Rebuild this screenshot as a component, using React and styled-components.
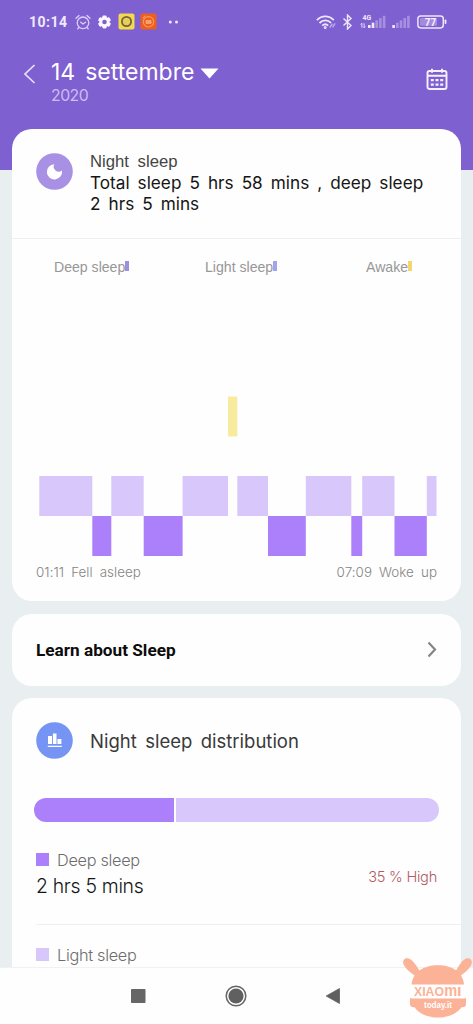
import React from "react";
import styled, { createGlobalStyle } from "styled-components";

const GlobalStyle = createGlobalStyle`
  * {
    box-sizing: border-box;
  }

  body {
    margin: 0;
    font-family: Inter, Roboto, "Liberation Sans", sans-serif;
  }
`;

const Screen = styled.div`
  width: 473px;
  height: 1024px;
  overflow: hidden;
  display: flex;
  flex-direction: column;
  position: relative;
  background: linear-gradient(#7f60d0 0 170px, #e9eff1 170px);
`;

const StatusBar = styled.div`
  height: 43px;
  padding: 0 26px 0 29px;
  display: flex;
  align-items: center;
  justify-content: space-between;
  color: #f1eafc;
  flex: none;
`;

const StatusGroup = styled.div`
  display: flex;
  align-items: center;
`;

const Clock = styled.span`
  width: 46px;
  font: 700 14px/20px Roboto, sans-serif;
  letter-spacing: 0.5px;
  white-space: nowrap;
`;

const StatusIcon = styled.svg`
  display: block;
  flex: none;
  margin-left: ${(props) => props.$gap || 0}px;
`;

const Header = styled.header`
  height: 85.5px;
  flex: none;
  display: flex;
  align-items: flex-start;
  padding: 16px 25px 0 23px;
  color: #fff;
`;

const BackIcon = styled.svg`
  margin-top: 5px;
  flex: none;
`;

const DateBlock = styled.div`
  flex: 1;
  padding-left: 15px;
`;

const DateLine = styled.div`
  display: flex;
  align-items: center;
  gap: 6px;
  height: 25px;
  margin-bottom: 1px;
  font-size: 23px;
  word-spacing: 3.5px;
  white-space: nowrap;

  svg {
    margin-top: 3px;
  }
`;

const Year = styled.div`
  font-size: 15.8px;
  line-height: 21px;
  letter-spacing: -0.5px;
  color: #cdbdf0;
`;

const CalendarIcon = styled.svg`
  margin-top: 9px;
  flex: none;
`;

const Card = styled.section`
  margin: 0 12px ${(props) => (props.$last ? 0 : 12.5)}px;
  height: ${(props) => props.$height}px;
  flex: none;
  background: #fefefe;
  border-radius: ${(props) => (props.$last ? "20px 20px 0 0" : "20px")};
  overflow: hidden;
`;

const CardHead = styled.div`
  display: flex;
  padding: 24px 24px 0;
  gap: 17px;
  height: ${(props) => props.$height}px;
`;

const SummaryHead = styled(CardHead)`
  border-bottom: 1px solid #edeff1;
`;

const RoundIcon = styled.svg`
  width: 37px;
  height: 37px;
  flex: none;
`;

const SummaryLabel = styled.div`
  margin-top: -1px;
  font: 16.7px/20px "Liberation Sans", sans-serif;
  word-spacing: 4px;
  color: #444;
`;

const SummaryText = styled.div`
  font-size: 17.2px;
  line-height: 21px;
  word-spacing: 3.2px;
  white-space: nowrap;
  color: #151515;
`;

const Legend = styled.div`
  display: grid;
  grid-template-columns: 151px 161px auto;
  padding: 19px 0 0 42px;
  height: 56px;
`;

const LegendItem = styled.div`
  display: flex;
  align-items: center;
  height: 18px;
  font-family: "Liberation Sans", sans-serif;
  font-size: 14.1px;
  color: #979797;
`;

const LegendMark = styled.i`
  width: 4px;
  height: 10px;
  margin-bottom: 1px;
  background: ${(props) => props.$color};
`;

const Chart = styled.svg`
  display: block;
`;

const ChartTimes = styled.div`
  display: flex;
  justify-content: space-between;
  padding: 6px 24px 0;
  font-size: 13.4px;
  line-height: 18px;
  font-weight: 300;
  letter-spacing: 0.05px;
  word-spacing: 3.2px;
  color: #858585;
`;

const LearnRow = styled.div`
  height: 100%;
  display: flex;
  align-items: center;
  justify-content: space-between;
  padding: 0 24px;
  font: 700 17.2px/22px Roboto, sans-serif;
  color: #0c0c0c;
`;

const DistributionTitle = styled.h2`
  margin: 0;
  font-size: 18.5px;
  line-height: 38px;
  font-weight: 400;
  word-spacing: 3.2px;
  color: #3a3a3a;
`;

const DistributionBar = styled.div`
  display: flex;
  gap: 1.5px;
  height: 24px;
  margin: 0 22px 26px;
  border-radius: 12px;
  overflow: hidden;
`;

const BarPart = styled.div`
  flex: ${(props) => props.$share};
  background: ${(props) => props.$color};
`;

const StageRow = styled.div`
  margin-left: 24px;
  padding-right: 24px;
  height: ${(props) => props.$height}px;
  display: flex;
  justify-content: space-between;
  border-bottom: 1px solid #edeff1;
`;

const StageName = styled.div`
  display: flex;
  align-items: center;
  gap: 8px;
  height: 24px;
  font-size: 16.3px;
  font-weight: 300;
  letter-spacing: -0.3px;
  color: #6d6d6d;
`;

const StageMark = styled.i`
  width: 13px;
  height: 13px;
  background: ${(props) => props.$color};
`;

const StageTime = styled.div`
  font-size: 19.4px;
  line-height: 29px;
  font-weight: 300;
  letter-spacing: -0.3px;
  color: #151515;
`;

const StageLevel = styled.div`
  padding-top: 19px;
  font-size: 14.6px;
  line-height: 20px;
  font-weight: 300;
  letter-spacing: -0.25px;
  color: #b35a66;
`;

const NextStage = styled.div`
  padding: 18px 24px 0;
`;

const NavBar = styled.nav`
  height: 57px;
  flex: none;
  margin-top: auto;
  padding-right: 3px;
  position: relative;
  display: flex;
  justify-content: center;
  align-items: center;
  gap: 78px;
  background: #fefefe;
  border-top: 1px solid #f0f1f3;
`;

const Watermark = styled.svg`
  position: absolute;
  right: 0;
  bottom: 4px;
`;

const LIGHT = "#d8c7fb";
const DEEP = "#ab80fa";
const AWAKE = "#f9eb9e";

const stages = [
  { type: "light", from: 39.3, to: 92.3 },
  { type: "deep", from: 92.3, to: 111.3 },
  { type: "light", from: 111.3, to: 143.7 },
  { type: "deep", from: 143.7, to: 182.6 },
  { type: "light", from: 182.6, to: 228 },
  { type: "awake", from: 228, to: 237.3 },
  { type: "light", from: 237.3, to: 268 },
  { type: "deep", from: 268, to: 305.8 },
  { type: "light", from: 305.8, to: 351.3 },
  { type: "deep", from: 351.3, to: 362.2 },
  { type: "light", from: 362.2, to: 394.5 },
  { type: "deep", from: 394.5, to: 426.8 },
  { type: "light", from: 426.8, to: 436.5 },
];

const stageStyle = {
  awake: { y: 101.5, color: AWAKE },
  light: { y: 181, color: LIGHT },
  deep: { y: 221, color: DEEP },
};

const legend = [
  { label: "Deep sleep", color: "#9d8fdc" },
  { label: "Light sleep", color: "#a3a3ea" },
  { label: "Awake", color: "#f3d66c" },
];

const SignalBars = ({ x, lit }) =>
  [0, 1, 2, 3, 4].map((i) => (
    <rect
      key={i}
      x={x + i * 3.7}
      y={13 - (3 + i * 2.3)}
      width="2.6"
      height={3 + i * 2.3}
      fill="#f1eafc"
      opacity={i < lit ? 1 : 0.35}
    />
  ));

const StatusIcons = () => (
  <StatusBar>
    <StatusGroup>
      <Clock>10:14</Clock>
      <StatusIcon width="16" height="16" viewBox="0 0 16 16" fill="none" stroke="#ddd0f7" strokeWidth="1.3" strokeLinecap="round">
        <circle cx="8" cy="8.8" r="5.8" />
        <path d="M5.7 8.2 8 10l2.6-1.8M1 4.2 4 1.4M15 4.2 12 1.4M4 13.5l-1.2 1.3M12 13.5l1.2 1.3" />
      </StatusIcon>
      <StatusIcon $gap={7} width="13" height="14" viewBox="0 0 13 14">
        <g fill="#fbf8ff">
          {[0, 60, 120].map((a) => (
            <rect key={a} x="4.3" y="0.5" width="4.4" height="13" rx="1.4" transform={`rotate(${a} 6.5 7)`} />
          ))}
          <circle cx="6.5" cy="7" r="5" />
        </g>
        <circle cx="6.5" cy="7" r="2.3" fill="#7f60d0" />
      </StatusIcon>
      <StatusIcon $gap={7} width="17" height="17" viewBox="0 0 17 17">
        <rect x="0.5" y="0.5" width="16" height="16" rx="2" fill="#f2da4e" />
        <circle cx="8.5" cy="8.5" r="4.6" fill="#e4ce5c" stroke="#746237" strokeWidth="1.8" />
      </StatusIcon>
      <StatusIcon $gap={5} width="17" height="17" viewBox="0 0 17 17">
        <rect x="0.5" y="0.5" width="16" height="16" rx="2" fill="#ef5f1c" />
        <circle cx="8.5" cy="8.8" r="5.2" fill="none" stroke="#f79a63" strokeWidth="1.1" />
        <path d="M2.8 5.2 5.5 2.8M6 7.7h5v2.6H6z" fill="#f79a63" stroke="#fbb184" strokeWidth="0.9" />
      </StatusIcon>
      <StatusIcon $gap={11} width="12" height="4" viewBox="0 0 12 4">
        <circle cx="2.3" cy="2" r="1.5" fill="#efe8fb" />
        <circle cx="8.5" cy="2" r="1.5" fill="#efe8fb" />
      </StatusIcon>
    </StatusGroup>
    <StatusGroup>
      <StatusIcon width="20" height="14" viewBox="0 0 20 14" fill="none" stroke="#eee6fb" strokeWidth="1.8">
        <path d="M0.9 5.2C5.8.2 13 .2 17.8 5.2M3.5 8c3.5-3.5 8.2-3.5 11.5-.2M6.2 10.6c2-1.8 4.2-1.8 6 0" />
        <circle cx="9.2" cy="12.4" r="0.6" />
        <path d="m13.8 12.6 2.5-4M16.6 12.4l2.5-4" stroke="#bba6e8" strokeWidth="1.6" />
      </StatusIcon>
      <StatusIcon $gap={6} width="11" height="16" viewBox="0 0 11 16" fill="none" stroke="#eee6fb" strokeWidth="1.4">
        <path d="m1.5 4.5 7.5 7L5.5 15V1L9 4.5l-7.5 7" />
      </StatusIcon>
      <StatusIcon $gap={7} width="28" height="16" viewBox="0 0 28 16">
        <text x="2.6" y="5.7" fontSize="7.5" fontWeight="700" fontFamily="Roboto" fill="#f1eafc" textLength="8.6" lengthAdjust="spacingAndGlyphs">4G</text>
        <path d="M1.9 9.3v4.4M.6 10.5l1.3-1.3M4.1 9.3v4.6M5.3 12.5l-1.3 1.3" stroke="#f1eafc" strokeWidth="0.9" fill="none" />
        <g transform="translate(0 1)">
          <SignalBars x={8} lit={2} />
        </g>
      </StatusIcon>
      <StatusIcon $gap={4} width="20" height="16" viewBox="0 0 20 16">
        <g transform="translate(0 1)">
          <SignalBars x={0.3} lit={1} />
        </g>
      </StatusIcon>
      <StatusIcon $gap={5.5} width="30" height="14" viewBox="0 0 30 14">
        <rect x="0.9" y="0.9" width="25.4" height="12" rx="2.8" fill="none" stroke="#eee6fb" strokeWidth="1.5" />
        <rect x="3" y="3" width="17" height="7.8" rx="1" fill="#a58bdf" />
        <rect x="27.6" y="4.5" width="1.8" height="4.6" rx="0.8" fill="#eee6fb" />
        <text x="13.4" y="10.5" textAnchor="middle" fontSize="10" fontWeight="700" fontFamily="Roboto" fill="#f5f0fd">77</text>
      </StatusIcon>
    </StatusGroup>
  </StatusBar>
);

const SleepChart = () => (
  <Chart width="449" height="262" viewBox="12 0 449 262">
    {stages.map((stage) => (
      <rect
        key={stage.from}
        x={stage.from}
        y={stageStyle[stage.type].y}
        width={stage.to - stage.from}
        height="40"
        fill={stageStyle[stage.type].color}
      />
    ))}
  </Chart>
);

const XiaomiToday = () => (
  <Watermark width="71" height="63" viewBox="402 957 71 63">
    <g fill="#fbb296">
      <path d="M411.5 984.5c1-11.5 11-19.3 26.5-19.3s25 7.8 26 19.3z" />
      <path d="M420 971.5l-4.5 4.5c-5-3-11.5-8.5-12.3-13-.6-3.5 2.8-5.7 6-4.3 4 1.8 8 8 10.8 12.8z" />
      <path d="M455.5 971.5l4.5 4.5c5-3 11-8.5 11.8-13 .6-3.5-2.8-5.7-6-4.3-4 1.8-7.5 8-10.3 12.8z" />
      <path d="M412 998.5h52c1.2-.8 2-.7 2 .8v5c0 2.2-1.5 3.2-4.500 3-5 7-13.500 10.200-23.500 10.200s-18.500-3.200-23.500-10.200c-3 .2-4.500-.8-4.500-3v-5c0-1.500.8-1.600 2-.8z" />
    </g>
    <rect x="411.5" y="985" width="53" height="13" fill="#fff" />
    <g fontFamily="Liberation Sans" fontWeight="700" fill="#fbb296">
      <text x="414" y="996.2" textLength="30" lengthAdjust="spacingAndGlyphs" fontSize="13">XIAO</text>
      <text x="444.3" y="996.2" textLength="13" lengthAdjust="spacingAndGlyphs" fontSize="16.5">m</text>
      <text x="457" y="996.2" textLength="4.5" lengthAdjust="spacingAndGlyphs" fontSize="13">I</text>
      <text x="424" y="1008" textLength="28" lengthAdjust="spacingAndGlyphs" fontSize="8.5" fill="#fff">today.it</text>
    </g>
  </Watermark>
);

const App = () => {
  return (
    <Screen>
      <GlobalStyle />
      <StatusIcons />
      <Header>
        <BackIcon width="13" height="20" viewBox="0 0 13 20" fill="none" stroke="#e9e0fa" strokeWidth="1.7">
          <path d="M11.5 1 2 10l9.5 9" />
        </BackIcon>
        <DateBlock>
          <DateLine>
            14 settembre
            <svg width="19" height="11" viewBox="0 0 19 11">
              <path d="M.5.5h18l-9 10z" fill="#fff" />
            </svg>
          </DateLine>
          <Year>2020</Year>
        </DateBlock>
        <CalendarIcon width="22" height="23" viewBox="0 0 22 23" fill="none" stroke="#f6f1fe" strokeWidth="1.9">
          <rect x="1.5" y="3" width="19" height="18" rx="2" />
          <path d="M6 .8v4M16 .8v4M1.5 7.7h19" />
          <path d="M4.8 12.1h3M9.5 12.1h3M14.2 12.1h3M4.8 16.6h3M9.5 16.6h3M14.2 16.6h3" strokeWidth="2.4" />
        </CalendarIcon>
      </Header>

      <Card $height={472.5}>
        <SummaryHead $height={110}>
          <RoundIcon viewBox="0 0 37 37">
            <circle cx="18.5" cy="18.5" r="18.3" fill="#a890e4" />
            <path d="M18.3 11.3a5 5 0 0 0 7.6 6.2A7.6 7.6 0 1 1 18.3 11.3z" fill="#fff" />
          </RoundIcon>
          <div>
            <SummaryLabel>Night sleep</SummaryLabel>
            <SummaryText>
              Total sleep 5 hrs 58 mins , deep sleep
              <br />2 hrs 5 mins
            </SummaryText>
          </div>
        </SummaryHead>
        <Legend>
          {legend.map((item) => (
            <LegendItem key={item.label}>
              {item.label}
              <LegendMark $color={item.color} />
            </LegendItem>
          ))}
        </Legend>
        <SleepChart />
        <ChartTimes>
          <span>01:11 Fell asleep</span>
          <span>07:09 Woke up</span>
        </ChartTimes>
      </Card>

      <Card $height={72}>
        <LearnRow>
          Learn about Sleep
          <svg width="10" height="17" viewBox="0 0 10 17" fill="none" stroke="#858585" strokeWidth="2.2">
            <path d="m1.5 1.5 6.5 7-6.5 7" />
          </svg>
        </LearnRow>
      </Card>

      <Card $height={269} $last>
        <CardHead $height={99.5}>
          <RoundIcon viewBox="0 0 37 37">
            <circle cx="18.5" cy="18.5" r="18.3" fill="#7694f4" />
            <path d="M12 14h4v8h-4zM16.9 11.5h3.6v10.5h-3.6zM21.4 17h4v5h-4zM11.8 23.7h14v1.4h-14z" fill="#fff" />
          </RoundIcon>
          <DistributionTitle>Night sleep distribution</DistributionTitle>
        </CardHead>
        <DistributionBar>
          <BarPart $share={35} $color={DEEP} />
          <BarPart $share={65.6} $color={LIGHT} />
        </DistributionBar>
        <StageRow $height={77}>
          <div>
            <StageName>
              <StageMark $color={DEEP} />
              Deep sleep
            </StageName>
            <StageTime>2 hrs 5 mins</StageTime>
          </div>
          <StageLevel>35 % High</StageLevel>
        </StageRow>
        <NextStage>
          <StageName>
            <StageMark $color={LIGHT} />
            Light sleep
          </StageName>
        </NextStage>
      </Card>

      <NavBar>
        <svg width="18" height="18" viewBox="0 0 18 18">
          <rect x="2" y="2" width="14.5" height="14" rx="0.8" fill="#666" />
        </svg>
        <svg width="22" height="22" viewBox="0 0 22 22">
          <circle cx="11" cy="11" r="9.8" fill="none" stroke="#666" strokeWidth="1.5" />
          <circle cx="11" cy="11" r="7.6" fill="#606060" />
        </svg>
        <svg width="16" height="18" viewBox="0 0 16 18">
          <path d="M14.5 1.5v15L1.2 9z" fill="#606060" stroke="#606060" strokeWidth="0.8" />
        </svg>
        <XiaomiToday />
      </NavBar>
    </Screen>
  );
};

export default App;
